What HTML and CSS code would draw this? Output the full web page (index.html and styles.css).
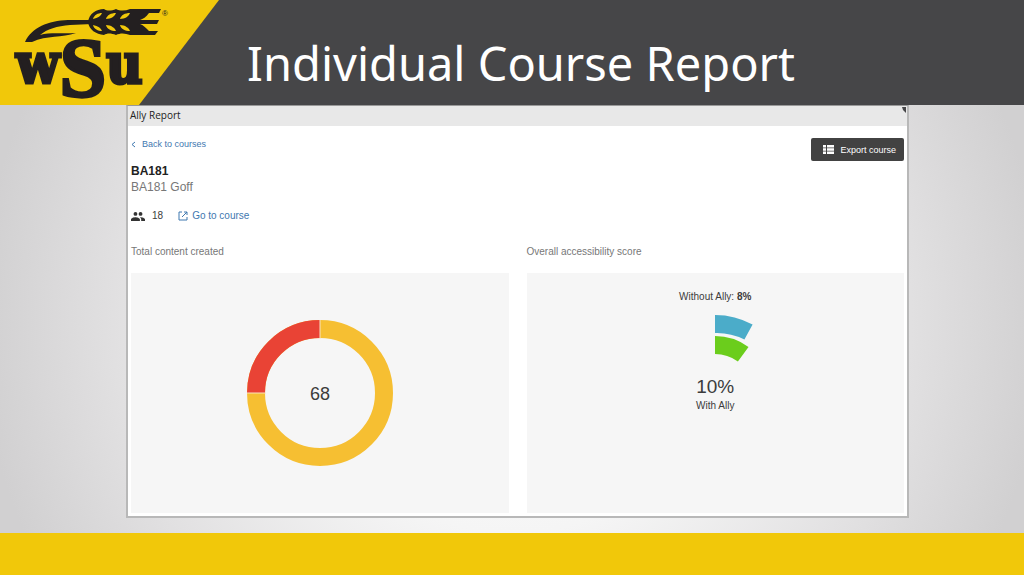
FILE: index.html
```html
<!DOCTYPE html>
<html lang="en">
<head>
<meta charset="utf-8">
<title>Individual Course Report</title>
<link rel="stylesheet" href="styles.css">
</head>
<body>
<div class="slide">
  <header class="banner">
    <div class="brand">
      <svg class="logo" viewBox="0 0 180 105" role="img" aria-label="WSU">
        <path class="ink" d="M25 42C32 27 48 21 68 20L92 20V24L70 25C57 26 47 29 40 35C50 32 62 34 76 33C62 38 47 35 32 42Z"/>
        <path class="ink" d="M88 22C89 14 96 9 104 9C107 11 111 11 116 9C120 11 125 11 130 9H161L159 13H149C146 17 143 19 140 20H159L157 24H140C143 25 146 28 149 31H158L155 35H130C125 33 120 33 116 35C111 33 107 33 104 35C96 34 89 30 88 22Z"/>
        <g class="grain">
          <path d="M93 19C94 15 98 13 102 13C101 16 98 18 93 19Z"/>
          <path d="M93 25C94 29 98 31 102 31C101 28 98 26 93 25Z"/>
          <path d="M106 19C107 15 111 13 116 13C115 16 111 19 106 19Z"/>
          <path d="M106 25C107 29 111 31 116 31C115 28 111 25 106 25Z"/>
          <path d="M120 19C121 15 125 13 130 13C129 16 125 19 120 19Z"/>
          <path d="M120 25C121 29 125 31 130 31C129 28 125 25 120 25Z"/>
        </g>
        <text class="letter" x="16" y="83">w<tspan class="initial" dy="14">S</tspan><tspan dy="-14">u</tspan></text>
        <text class="mark" x="162" y="16">®</text>
      </svg>
    </div>
    <h1 class="title">Individual Course Report</h1>
  </header>

  <main class="stage">
    <section class="report">
      <div class="report-bar">
        <h2 class="report-name">Ally Report</h2>
        <svg class="corner" viewBox="0 0 6 8" aria-hidden="true"><path d="M1 1H5V7L2 4Z"/></svg>
      </div>
      <div class="report-body">
        <div class="course-head">
          <div class="course">
            <a class="back" href="#courses">
              <svg class="chevron" viewBox="0 0 5 7" aria-hidden="true"><path d="M4 1L1 3.500L4 6"/></svg>Back to courses
            </a>
            <h3 class="code">BA181</h3>
            <p class="name">BA181 Goff</p>
            <div class="meta">
              <svg class="people" viewBox="1 5 22 14" aria-hidden="true"><path d="M16 11a3 3 0 1 0 0-6 3 3 0 0 0 0 6zM8 11a3 3 0 1 0 0-6 3 3 0 0 0 0 6zM8 13c-2.300 0-7 1.200-7 3.500V19h14v-2.500C15 14.200 10.300 13 8 13zM16 13c-.3 0-.6 0-1 .1 1.200.8 2 2 2 3.400V19h6v-2.500c0-2.300-4.700-3.500-7-3.500z"/></svg>
              <span class="count">18</span>
              <a class="go" href="#course">
                <svg class="launch" viewBox="0 0 10 10" aria-hidden="true"><path d="M4 1H1V9H9V6M6 1H9V4M9 1L4 6"/></svg>Go to course
              </a>
            </div>
          </div>
          <button class="export" type="button">
            <svg class="list" viewBox="0 0 11 9" aria-hidden="true"><path d="M0 0H3V2.500H0ZM4 0H11V2.500H4ZM0 3.200H3V5.700H0ZM4 3.200H11V5.700H4ZM0 6.500H3V9H0ZM4 6.500H11V9H4Z"/></svg>Export course
          </button>
        </div>
        <div class="charts">
          <section class="chart">
            <h4 class="chart-title">Total content created</h4>
            <div class="panel">
              <svg class="donut" viewBox="-73 -73 146 146" role="img" aria-label="68 items">
                <circle class="ring" r="64"/>
                <path class="slice" d="M-64 0A64 64 0 0 1 0 -64"/>
                <path class="split" d="M0 -73V-54M-73 0H-54"/>
                <text class="total" text-anchor="middle" y="7">68</text>
              </svg>
            </div>
          </section>
          <section class="chart">
            <h4 class="chart-title">Overall accessibility score</h4>
            <div class="panel score">
              <p class="label">Without Ally: <b>8%</b></p>
              <svg class="gauge" viewBox="-78 -78 156 48" aria-hidden="true">
                <path class="without" d="M0 -78A78 78 0 0 1 37.600 -68.400L29.400 -53.500A61 61 0 0 0 0 -60Z"/>
                <path class="with" d="M0 -57A57 57 0 0 1 33.500 -46.100L22.900 -31.500A39 39 0 0 0 0 -39Z"/>
              </svg>
              <p class="percent">10%</p>
              <p class="label">With Ally</p>
            </div>
          </section>
        </div>
      </div>
    </section>
  </main>
  <footer class="stripe"></footer>
</div>
</body>
</html>
```
FILE: styles.css
```css
* { box-sizing: border-box; }
body, h1, h2, h3, h4, p { margin: 0; }
body { font-family: "Liberation Sans", Arial, sans-serif; color: #3c3c3c; }
svg { display: block; flex: none; }
a { color: #3f78b0; text-decoration: none; }

.slide { display: flex; flex-direction: column; min-height: 100vh; }

.banner { display: flex; height: 105px; background: #464648; }
.brand {
  flex: none;
  width: 219px;
  background: #f1c80a;
  clip-path: polygon(0 0, 100% 0, 139px 100%, 0 100%);
}
.logo { width: 180px; height: 105px; overflow: visible; }
.ink { fill: #231f20; }
.grain { fill: #f1c80a; }
.letter {
  fill: #231f20;
  stroke: #231f20;
  stroke-width: 3;
  font: bold 56px "DejaVu Serif Condensed", "DejaVu Serif", serif;
}
.initial { font: bold 84px "Liberation Serif", serif; }
.mark { fill: #231f20; font-size: 8px; }
.title {
  padding: 31px 0 0 28px;
  color: #fff;
  font: 47px/65px "Noto Sans", sans-serif;
  white-space: nowrap;
}

.stage {
  display: flex;
  flex: 1;
  padding: 0 115px 15px 126px;
  background: radial-gradient(ellipse 52% 125% at 50% 50%, #fff 0%, #f5f5f5 40%, #e1e0e1 75%, #d1d0d1 100%);
}
.report {
  display: flex;
  flex: 1;
  flex-direction: column;
  border: 2px solid #b8b8b8;
  border-top: 1px solid #999;
  background: #fff;
}
.report-bar { display: flex; justify-content: space-between; height: 20px; background: #e8e8e8; }
.report-name { padding-left: 2px; font: 500 10px/18px "Open Sans", sans-serif; color: #222; }
.corner { width: 6px; height: 8px; fill: #464648; }
.report-body { display: flex; flex: 1; flex-direction: column; padding: 12px 3px 3px; }

.course-head { display: flex; justify-content: space-between; align-items: flex-start; }
.back { display: flex; align-items: center; gap: 6px; font-size: 9px; line-height: 12px; }
.chevron { width: 5px; height: 7px; fill: none; stroke: #3f78b0; stroke-width: 1; }
.code { margin-top: 13px; font-size: 12px; line-height: 16px; color: #222; }
.name { font-size: 12px; line-height: 16px; color: #777; }
.meta { display: flex; align-items: center; margin-top: 14px; font-size: 10px; line-height: 14px; }
.people { width: 14px; height: 9px; fill: #333; }
.count { margin-left: 7px; }
.go { display: flex; align-items: center; gap: 4px; margin-left: 15px; }
.launch { width: 10px; height: 10px; fill: none; stroke: #3f78b0; stroke-width: 1; }
.export {
  display: flex;
  align-items: center;
  gap: 6px;
  height: 23px;
  padding: 0 8px 0 12px;
  border: 0;
  border-radius: 2px;
  background: #424242;
  color: #fff;
  font: 9px "Liberation Sans", Arial, sans-serif;
}
.list { width: 11px; height: 9px; fill: #fff; }

.charts { display: grid; flex: 1; grid-template-columns: 1fr 1fr; gap: 18px; margin-top: 22px; }
.chart { display: flex; flex-direction: column; }
.chart-title { font-size: 10px; font-weight: normal; line-height: 14px; color: #777; }
.panel {
  display: flex;
  flex: 1;
  align-items: center;
  justify-content: center;
  margin-top: 14px;
  background: #f6f6f6;
}
.donut { width: 146px; height: 146px; }
.ring { fill: none; stroke: #f6bf32; stroke-width: 18; }
.slice { fill: none; stroke: #e94335; stroke-width: 18; }
.split { stroke: #f8e3c0; stroke-width: 1; }
.total { fill: #3c3c3c; font-size: 18px; }
.score { flex-direction: column; justify-content: flex-start; padding-top: 17px; }
.label { font-size: 10px; line-height: 14px; }
.gauge { width: 156px; height: 48px; margin-top: 11px; }
.without { fill: #4bacc9; }
.with { fill: #6bcd1c; }
.percent { margin-top: 12px; font-size: 19px; line-height: 24px; }

.stripe { height: 42px; background: #f1c80a; }
```
